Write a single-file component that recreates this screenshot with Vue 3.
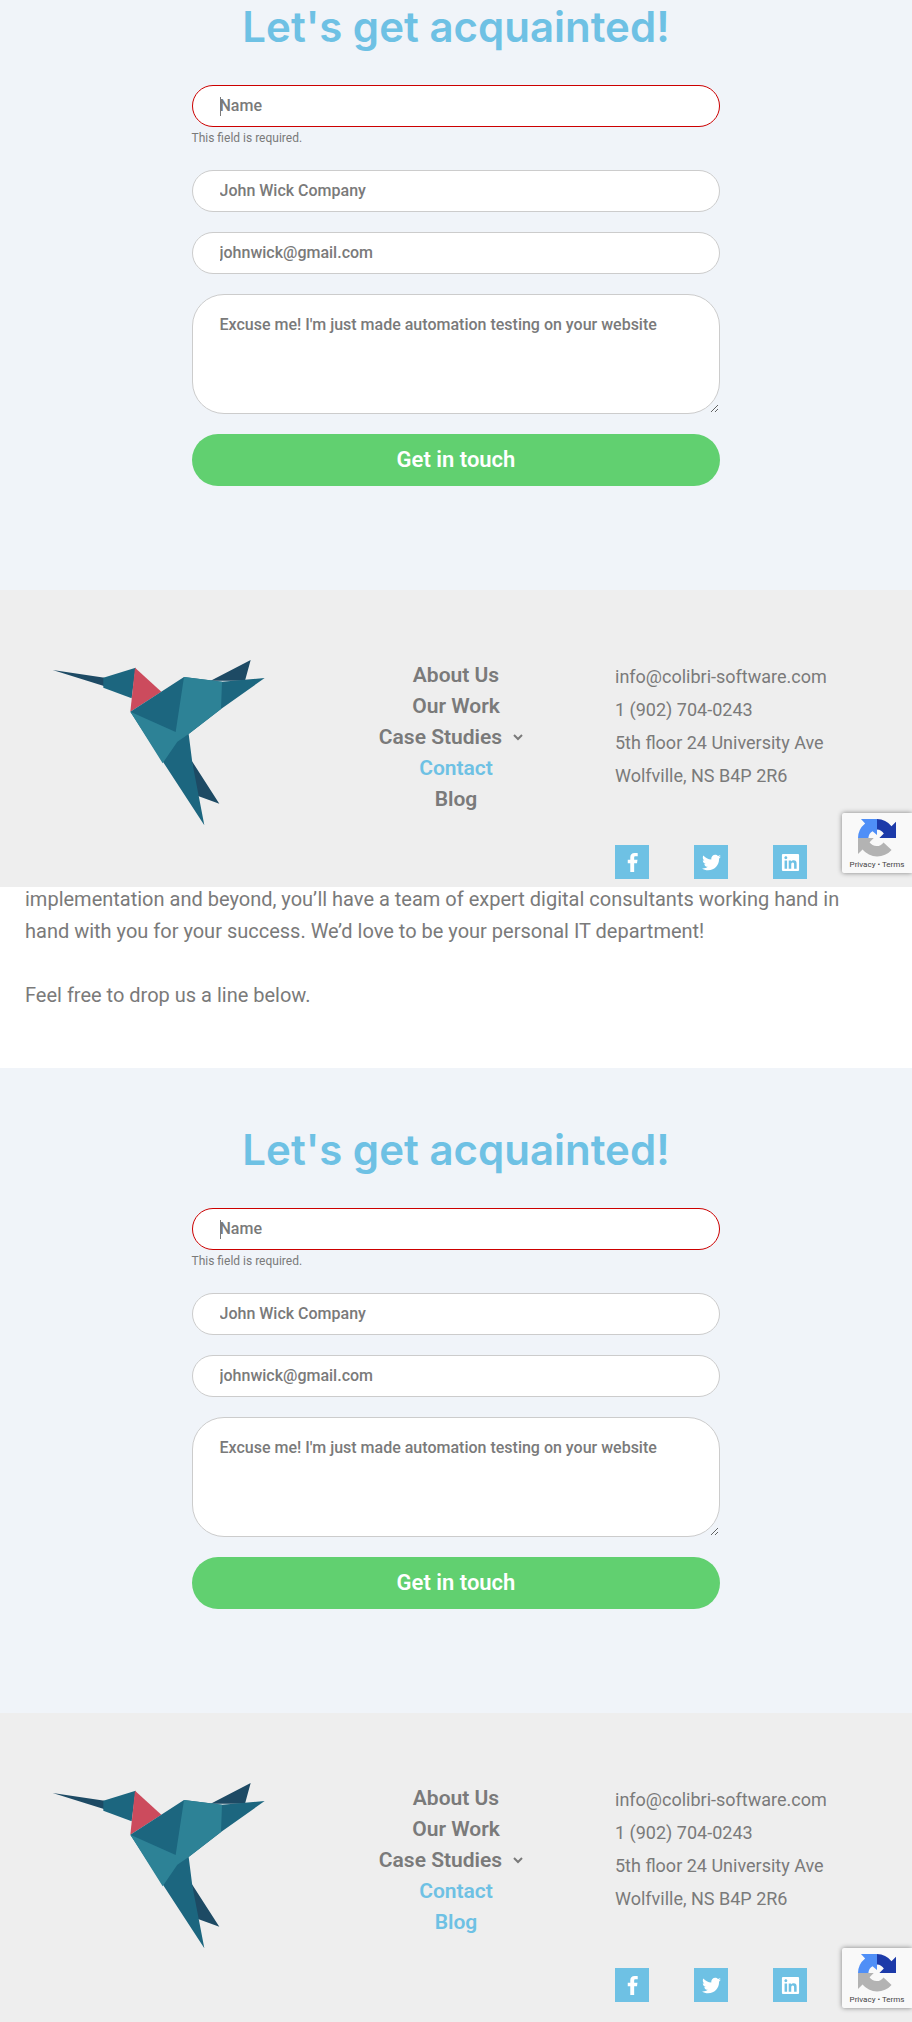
<script setup>
const frames = [
  { id: 'first', intro: false, active: ['Contact'] },
  { id: 'second', intro: true, active: ['Contact', 'Blog'] },
]
const navItems = ['About Us', 'Our Work', 'Case Studies', 'Contact', 'Blog']
const socials = [
  {
    name: 'Facebook',
    path: 'M14 8.2h2.6V4.3c-.5-.1-2-.2-3.8-.2-3.800 0-5.600 2-5.600 5.400v3H4v4.300h3.200V28h4.900V16.800h3.600l.6-4.300h-4.200V9.900c0-1.100.4-1.700 1.900-1.700z',
    box: '-2 4 24 24',
  },
  {
    name: 'Twitter',
    path: 'M459.370 151.716c.325 4.548.325 9.097.325 13.645 0 138.720-105.583 298.558-298.558 298.558-59.452 0-114.680-17.219-161.137-47.106 8.447.974 16.568 1.299 25.340 1.299 49.055 0 94.213-16.568 130.274-44.832-46.132-.975-84.792-31.188-98.112-72.772 6.498.974 12.995 1.624 19.818 1.624 9.421 0 18.843-1.300 27.614-3.573-48.081-9.747-84.143-51.980-84.143-102.985v-1.299c13.969 7.797 30.214 12.670 47.431 13.319-28.264-18.843-46.781-51.005-46.781-87.391 0-19.492 5.197-37.360 14.294-52.954 51.655 63.675 129.300 105.258 216.365 109.807-1.624-7.797-2.599-15.918-2.599-24.040 0-57.828 46.782-104.934 104.934-104.934 30.213 0 57.502 12.670 76.670 33.137 23.715-4.548 46.456-13.320 66.599-25.340-7.798 24.366-24.366 44.833-46.132 57.827 21.117-2.273 41.584-8.122 60.426-16.243-14.292 20.791-32.161 39.308-52.628 54.253z',
    box: '0 0 512 512',
  },
  {
    name: 'LinkedIn',
    path: 'M416 32H31.900C14.300 32 0 46.500 0 64.300v383.400C0 465.500 14.300 480 31.900 480H416c17.600 0 32-14.500 32-32.300V64.300c0-17.800-14.400-32.300-32-32.300zM135.400 416H69V202.200h66.500V416zm-33.200-243c-21.300 0-38.500-17.300-38.500-38.500S80.900 96 102.200 96c21.200 0 38.500 17.300 38.500 38.500 0 21.300-17.200 38.500-38.500 38.500zm282.100 243h-66.400V312c0-24.800-.5-56.700-34.500-56.700-34.600 0-39.900 27-39.900 54.900V416h-66.400V202.200h63.700v29.200h.9c8.900-16.800 30.600-34.500 62.900-34.500 67.200 0 79.700 44.300 79.700 101.900V416z',
    box: '-24 8 496 496',
  },
]
</script>

<template>
  <main class="page">
    <div v-for="frame in frames" :key="frame.id" class="frame" :class="frame.id">
      <section v-if="frame.intro" class="intro">
        <p>
          implementation and beyond, you’ll have a team of expert digital consultants working hand in
          hand with you for your success. We’d love to be your personal IT department!
        </p>
        <p>Feel free to drop us a line below.</p>
      </section>

      <section class="contact">
        <h2>Let's get acquainted!</h2>
        <form class="form" @submit.prevent>
          <div class="field">
            <div class="control">
              <input
                class="invalid"
                type="text"
                placeholder="Name"
                aria-label="Name"
                aria-invalid="true"
                :aria-describedby="frame.id + '-error'"
              />
              <span class="caret"></span>
            </div>
            <span :id="frame.id + '-error'" class="error">This field is required.</span>
          </div>
          <input type="text" aria-label="Company" value="John Wick Company" />
          <input type="email" aria-label="Email" value="johnwick@gmail.com" />
          <textarea aria-label="Message" value="Excuse me! I'm just made automation testing on your website"></textarea>
          <button type="submit">Get in touch</button>
        </form>
      </section>

      <footer class="footer">
        <a class="logo" href="#" aria-label="Colibri Software">
          <svg viewBox="36 60 639 498">
            <path fill="#1d4a64" d="M38 90 194 113 194 139zM512 122 632 60 615 122zM455 362 538 491 468 466z" />
            <path fill="#1c667f" d="M190 113 287 83 275 175 190 143z" />
            <path fill="#cc4b5d" d="M285 83 364 155 271 215z" />
            <path fill="#1c667f" d="M432 111 546 125 674 114 543 207 446 282 457 368 493 556 271 215z" />
            <path fill="#2d8296" d="M432 111 546 125 543 207 446 282 412 305 368 370 271 215 407 276z" />
          </svg>
        </a>
        <nav class="nav">
          <a v-for="item in navItems" :key="item" href="#" :class="{ active: frame.active.includes(item) }">
            {{ item }}
            <svg v-if="item === 'Case Studies'" class="chevron" viewBox="0 0 10 8">
              <path d="M1 1 5 5 9 1" />
            </svg>
          </a>
        </nav>
        <div class="details">
          <a href="#">info@colibri-software.com</a>
          <a href="#">1 (902) 704-0243</a>
          <span>5th floor 24 University Ave</span>
          <span>Wolfville, NS B4P 2R6</span>
          <div class="socials">
            <a v-for="s in socials" :key="s.name" href="#" :aria-label="s.name">
              <svg :viewBox="s.box"><path :d="s.path" /></svg>
            </a>
          </div>
        </div>
      </footer>

      <aside class="badge">
        <svg viewBox="0 0 64 64">
          <path fill="#1c3aa9" d="M64 32V4.500l-7.600 7.600A32 32 0 0 0 32 0v17.500a14 14 0 0 1 11.500 7L36 32z" />
          <path fill="#4f8ff7" d="M32 0H5l7 7.500A32 32 0 0 0 0 32h17.500a14 14 0 0 1 7-11.500L32 27z" />
          <path fill="#b3b3b3" d="M0 32v27l7.600-7.600A32 32 0 0 0 56.500 52L43 39.500A14 14 0 0 1 19.500 39l7-7z" />
        </svg>
        <p><a href="#">Privacy</a> • <a href="#">Terms</a></p>
      </aside>
    </div>
  </main>
</template>

<style>
body {
  margin: 0;
  background: #fff;
}
</style>

<style scoped>
.page {
  font-family: Roboto, "Liberation Sans", sans-serif;
  color: #7a7a7a;
}
.page *,
.page {
  box-sizing: border-box;
}
a {
  color: inherit;
  text-decoration: none;
}
.frame {
  position: relative;
  overflow: hidden;
}
.intro {
  margin-top: -4px;
  padding: 0 25px 57px;
  font-size: 20px;
  line-height: 32px;
}
.intro p {
  margin: 0 0 32px;
}
.intro p:last-child {
  margin: 0;
}
.contact {
  background: #f0f4f9;
  padding-bottom: 104px;
}
.second .contact {
  padding-top: 55px;
}
h2 {
  margin: 0;
  padding-bottom: 31px;
  color: #6ec1e4;
  font: 600 42px/54px Inter, "Open Sans", sans-serif;
  text-align: center;
}
.form {
  width: 58%;
  margin: 0 auto;
  display: flex;
  flex-direction: column;
  gap: 20px;
}
.field {
  display: flex;
  flex-direction: column;
}
.control {
  position: relative;
  display: flex;
}
input,
textarea {
  display: block;
  width: 100%;
  margin: 0;
  border: 1px solid #ccc;
  background: #fff;
  color: #7a7a7a;
  font: 500 16px/24px Roboto, sans-serif;
  outline: none;
}
input {
  height: 42px;
  padding: 0 27px 1px;
  border-radius: 21px;
}
input::placeholder {
  color: #7a7a7a;
  opacity: 1;
}
.invalid {
  border-color: #c00;
}
.caret {
  position: absolute;
  left: 28px;
  top: 12px;
  width: 1px;
  height: 19px;
  background: #7a7a7a;
}
.error {
  padding: 1px 0 2px;
  font-size: 12px;
  font-weight: 400;
  line-height: 20px;
}
textarea {
  height: 120px;
  padding: 18px 27px;
  border-radius: 32px;
  resize: vertical;
}
button {
  height: 52px;
  border: 0;
  border-radius: 26px;
  background: #61d070;
  color: #fff;
  font: 600 22px/32px Roboto, sans-serif;
}
.footer {
  display: grid;
  grid-template-columns: repeat(3, 1fr);
  padding: 70px 0 8px;
  background: #eee;
}
.second .footer {
  padding-bottom: 20px;
}
.logo {
  padding-left: 52px;
}
.logo svg {
  display: block;
  width: 213px;
  height: 166px;
}
.nav {
  display: flex;
  flex-direction: column;
  align-items: center;
  font-size: 21px;
  font-weight: 600;
  line-height: 31px;
}
.nav a {
  display: flex;
  align-items: center;
}
.nav .active {
  color: #6ec1e4;
}
.chevron {
  width: 10px;
  height: 8px;
  margin: 0 10px 0 11px;
  fill: none;
  stroke: currentColor;
  stroke-width: 2;
}
.details {
  display: flex;
  flex-direction: column;
  padding-left: 7px;
  font-size: 18px;
  line-height: 33px;
}
.socials {
  display: flex;
  gap: 45px;
  margin-top: 53px;
}
.socials a {
  display: flex;
  align-items: center;
  justify-content: center;
  width: 34px;
  height: 34px;
  background: #6ec1e4;
}
.socials svg {
  width: 19px;
  height: 19px;
  fill: #fff;
}
.badge {
  position: absolute;
  right: 0;
  bottom: 14px;
  width: 70px;
  height: 60px;
  padding-top: 6px;
  border-radius: 2px 0 0 2px;
  background: #f9f9f9;
  box-shadow: 0 0 5px #808080;
  text-align: center;
}
.badge svg {
  display: block;
  width: 38px;
  height: 38px;
  margin: 0 auto;
}
.badge p {
  margin: 0;
  color: #444;
  font-size: 8px;
  line-height: 16px;
}
</style>
